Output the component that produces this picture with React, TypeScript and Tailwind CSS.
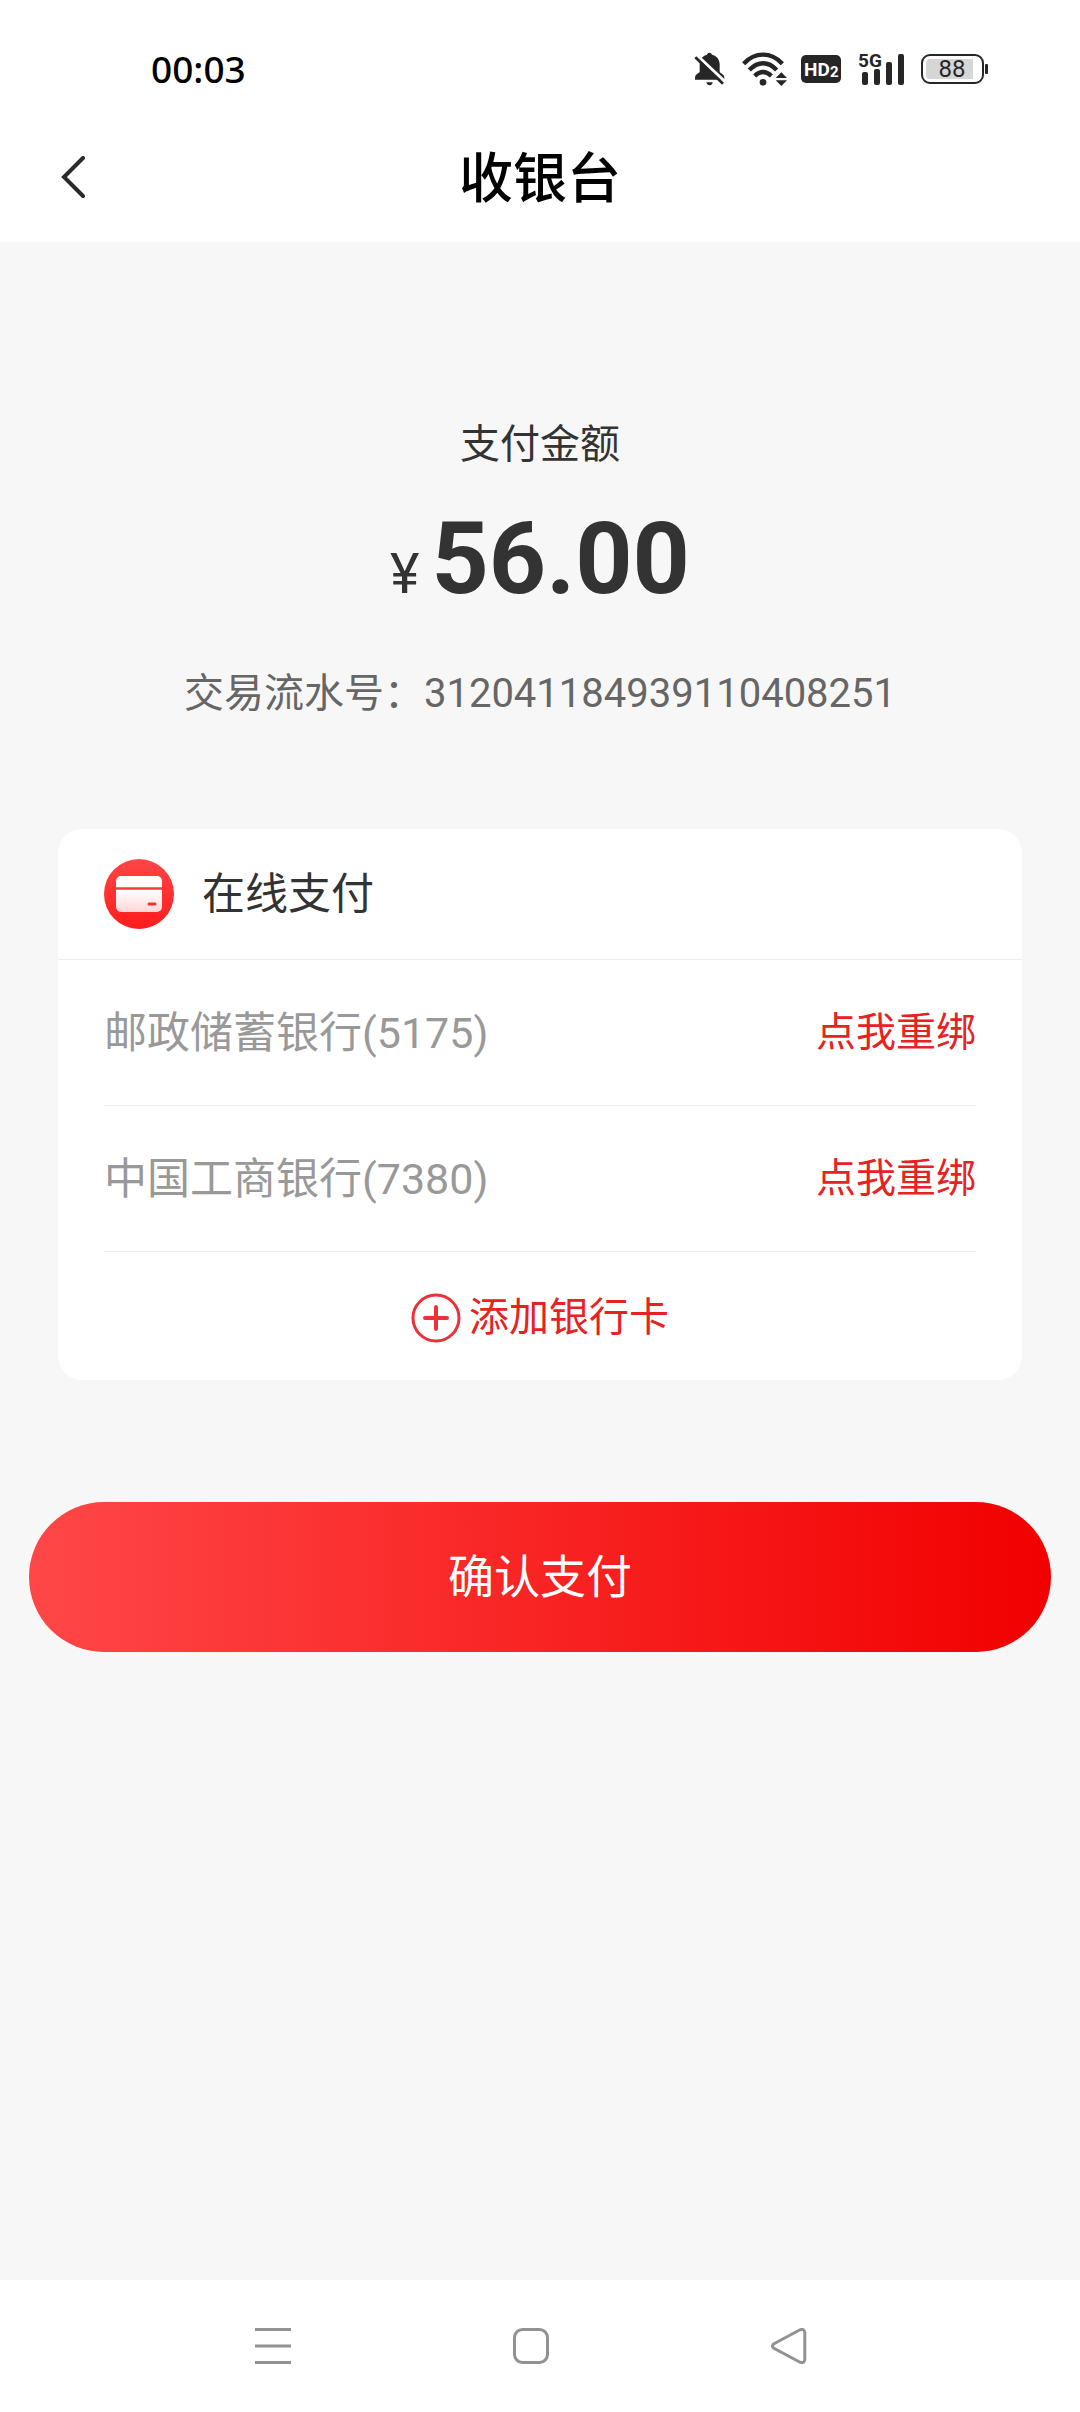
const banks = [
  { name: "邮政储蓄银行", tail: "5175" },
  { name: "中国工商银行", tail: "7380" },
];

function BellOffIcon() {
  return (
    <svg width="32" height="36" viewBox="0 0 96 108" fill="none">
      <path
        d="M46 5c4 0 7 2 8 6 14 3 23 14 23 29v22c0 4 14 6 14 18v6H3v-6c0-12 14-14 14-18V40c0-15 9-26 22-29 1-4 4-6 7-6Z"
        fill="#262626"
      />
      <path d="M37 94h19c-1 5-4 9-9 9s-9-4-10-9Z" fill="#262626" />
      <path d="M8 12 95 94" stroke="#fff" strokeWidth="9" />
      <path d="M4 19 87 98" stroke="#262626" strokeWidth="8" />
    </svg>
  );
}

function WifiIcon() {
  return (
    <svg width="46" height="36" viewBox="0 0 138 108" fill="none">
      <g stroke="#262626" strokeWidth="13">
        <path d="M5 38C39 2 87 2 121 38" />
        <path d="M22 57C48 30 79 30 104 57" />
        <path d="M38 75C54 59 72 59 88 75" />
      </g>
      <circle cx="63" cy="94" r="10" fill="#262626" />
      <path d="m118 64 17 17h-34zM118 105l17-17h-34z" fill="#262626" />
    </svg>
  );
}

function HdIcon() {
  return (
    <svg width="42" height="30" viewBox="0 0 42 30">
      <rect x="1" y="1" width="40" height="28" rx="5" fill="#262626" />
      <g fill="#fff" fontFamily="Roboto, sans-serif" fontWeight="700">
        <text x="4" y="22" fontSize="19">HD</text>
        <text x="30" y="23" fontSize="15">2</text>
      </g>
    </svg>
  );
}

function SignalIcon() {
  return (
    <svg width="48" height="40" viewBox="0 0 48 40" fill="#262626">
      <text x="0" y="18" fontSize="19" fontFamily="Roboto, sans-serif" fontWeight="700">5G</text>
      <rect x="4" y="23" width="6" height="13" rx="2" />
      <rect x="16" y="20" width="6" height="16" rx="2" />
      <rect x="28" y="13" width="6" height="23" rx="2" />
      <rect x="40" y="5" width="6" height="31" rx="2" />
    </svg>
  );
}

function BatteryIcon() {
  return (
    <svg width="68" height="32" viewBox="0 0 68 32">
      <rect x="2" y="2" width="61" height="28" rx="8" fill="#fff" stroke="#262626" strokeWidth="2" />
      <path d="M10 6h43v20H10q-4 0-4-4V10q0-4 4-4Z" fill="#d6d6d6" />
      <rect x="65" y="11" width="3" height="10" rx="1" fill="#262626" />
      <text x="32" y="24" textAnchor="middle" fontSize="24" fontFamily="Roboto, sans-serif" fill="#262626">88</text>
    </svg>
  );
}

function CardIcon() {
  return (
    <svg width="70" height="70" viewBox="0 0 70 70">
      <defs>
        <linearGradient id="disc" x1="0" y1="0" x2="0" y2="1">
          <stop offset="0" stopColor="#ff4646" />
          <stop offset="1" stopColor="#ff1c1c" />
        </linearGradient>
        <linearGradient id="card" x1="0" y1="0" x2="0" y2="1">
          <stop offset="0.4" stopColor="#fff" />
          <stop offset="1" stopColor="#ffd6d6" />
        </linearGradient>
      </defs>
      <circle cx="35" cy="35" r="35" fill="url(#disc)" />
      <rect x="12" y="17" width="46" height="36" rx="5" fill="url(#card)" />
      <path d="M12 29.500h46" stroke="#f23c3c" strokeWidth="2.500" />
      <path d="M45 45h6" stroke="#f03030" strokeWidth="3" strokeLinecap="round" />
    </svg>
  );
}

function StatusBar() {
  return (
    <div className="flex h-[138px] items-center justify-between pr-[92px] pl-[151px]">
      <span className="font-['Noto_Sans',sans-serif] text-[37px] leading-[40px] font-medium text-black">00:03</span>
      <div className="flex items-center">
        <BellOffIcon />
        <div className="ml-4"><WifiIcon /></div>
        <div className="ml-3"><HdIcon /></div>
        <div className="ml-4"><SignalIcon /></div>
        <div className="ml-[14px]"><BatteryIcon /></div>
      </div>
    </div>
  );
}

function Header() {
  return (
    <header className="grid h-[104px] grid-cols-[1fr_auto_1fr] items-start px-[60px]">
      <button type="button" aria-label="返回" className="flex h-20 w-10 items-center">
        <svg width="28" height="44" viewBox="0 0 28 44" fill="none" stroke="#2b2b2b" strokeWidth="4" strokeLinecap="round">
          <path d="M23 2 4 21l19 19" />
        </svg>
      </button>
      <h1 className="text-[54px] leading-[84px] font-medium text-black">收银台</h1>
    </header>
  );
}

function NavBar() {
  return (
    <nav className="flex h-[132px] items-center justify-center gap-[218px] bg-white pr-[18px]">
      <button type="button" aria-label="菜单" className="flex size-10 items-center justify-center">
        <svg width="36" height="36" viewBox="0 0 36 36" stroke="#929292" strokeWidth="3">
          <path d="M0 1.500h36M0 18h36M0 34.500h36" />
        </svg>
      </button>
      <button type="button" aria-label="主页" className="flex size-10 items-center justify-center">
        <svg width="36" height="36" viewBox="0 0 36 36" fill="none" stroke="#929292" strokeWidth="3">
          <rect x="1.500" y="1.500" width="33" height="33" rx="8" />
        </svg>
      </button>
      <button type="button" aria-label="后退" className="flex size-10 items-center justify-center">
        <svg width="36" height="36" viewBox="0 0 36 36" fill="none" stroke="#929292" strokeWidth="3">
          <path d="M2.500 16 29 1.800q4.500-1.500 4.800 2.700v27q-.3 4.200-4.800 2.700L2.500 20q-2-2 0-4Z" />
        </svg>
      </button>
    </nav>
  );
}

export default function App() {
  return (
    <div className="flex min-h-screen flex-col bg-[#f7f7f7] font-['Roboto','Noto_Sans_CJK_SC',sans-serif] text-[#333]">
      <div className="bg-white">
        <StatusBar />
        <Header />
      </div>

      <main className="flex-1">
        <section className="flex flex-col items-center pt-[173px] text-[40px] leading-[60px]">
          <p>支付金额</p>
          <p className="mt-6 flex items-baseline gap-3 leading-[120px]">
            <span className="text-[56px]">¥</span>
            <span className="text-[100px] font-bold">56.00</span>
          </p>
          <p className="mt-[30px] text-[#666]">交易流水号：312041184939110408251</p>
        </section>

        <section className="mx-[58px] mt-[105px] rounded-3xl bg-white">
          <div className="flex h-[131px] items-center gap-7 border-b border-[#eee] px-[46px]">
            <CardIcon />
            <h2 className="text-[43px] leading-[60px]">在线支付</h2>
          </div>
          <ul className="px-[46px]">
            {banks.map((bank) => (
              <li key={bank.tail} className="flex h-[146px] items-center justify-between border-b border-[#eee]">
                <span className="text-[43px] leading-[60px] text-[#999]">
                  {bank.name}({bank.tail})
                </span>
                <button type="button" className="text-[40px] leading-[60px] text-[#e62222]">点我重绑</button>
              </li>
            ))}
          </ul>
          <button type="button" className="flex h-[128px] w-full items-center justify-center gap-2 pt-1 text-[40px] leading-[60px] text-[#e62222]">
            <svg width="50" height="50" viewBox="0 0 50 50" fill="none" stroke="#e93338" strokeLinecap="round">
              <circle cx="25" cy="25" r="23" strokeWidth="3" />
              <path d="M14 25h22M25 14v22" strokeWidth="4" />
            </svg>
            添加银行卡
          </button>
        </section>

        <div className="mt-[122px] px-[29px]">
          <button type="button" className="h-[150px] w-full rounded-full bg-linear-to-r/srgb from-[#ff4747] to-[#f20000] text-[46px] leading-[60px] text-white">
            确认支付
          </button>
        </div>
      </main>

      <NavBar />
    </div>
  );
}
